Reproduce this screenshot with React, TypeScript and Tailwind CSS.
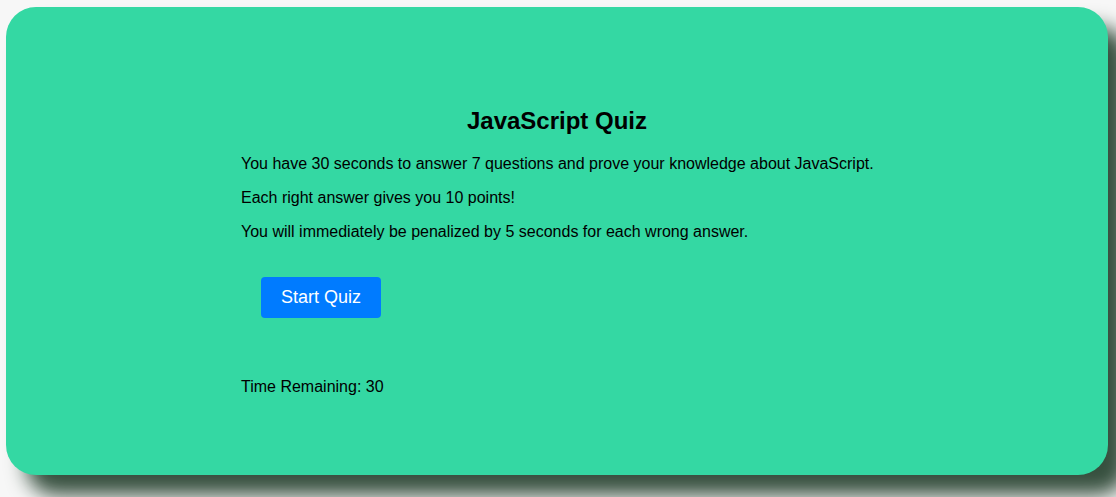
export default function App() {
  return (
    <div className="min-h-[497px] w-[1116px] bg-[#f7f7f7] pt-[7px] pl-[6px] font-['Liberation_Sans',Arial,sans-serif] text-black overflow-hidden">
      <div className="w-[1102px] h-[468px] rounded-[30px] bg-[#34d8a3] shadow-[20px_20px_20px_#37503f] pt-[100px]">
        <h1 className="text-center text-[24px] leading-[28px] font-bold">JavaScript Quiz</h1>
        <div className="ml-[235px] w-[700px]">
          <div className="mt-[20px] flex flex-col gap-4 text-base leading-[18px]">
            <p>You have 30 seconds to answer 7 questions and prove your knowledge about JavaScript.</p>
            <p>Each right answer gives you 10 points!</p>
            <p>You will immediately be penalized by 5 seconds for each wrong answer.</p>
          </div>
          <button className="mt-[36px] ml-5 h-[41px] w-[120px] rounded bg-[#007bff] text-[18px] leading-[21px] text-white">
            Start Quiz
          </button>
          <p className="mt-[60px] text-base leading-[18px]">Time Remaining: 30</p>
        </div>
      </div>
    </div>
  )
}
